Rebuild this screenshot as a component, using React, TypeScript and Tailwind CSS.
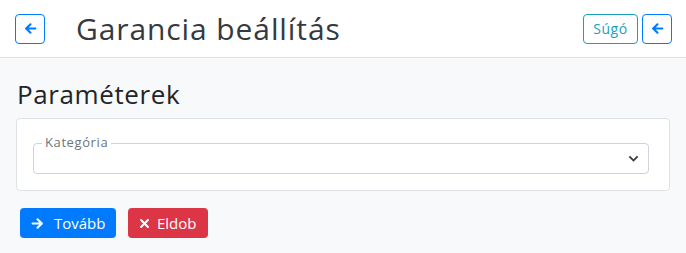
import React from 'react'

const font = { fontFamily: '"Open Sans", "Noto Sans", sans-serif' }

function ArrowLeft({ className }: { className?: string }) {
  return (
    <svg viewBox="0 0 16 16" className={className} fill="none" stroke="currentColor" strokeWidth="2.6" strokeLinecap="round" strokeLinejoin="round">
      <path d="M14 8H3M8 2.8L2.6 8 8 13.2" />
    </svg>
  )
}

function ArrowRight({ className }: { className?: string }) {
  return (
    <svg viewBox="0 0 16 16" className={className} fill="none" stroke="currentColor" strokeWidth="2.6" strokeLinecap="round" strokeLinejoin="round">
      <path d="M2 8h11M8 2.8L13.4 8 8 13.2" />
    </svg>
  )
}

function Times({ className }: { className?: string }) {
  return (
    <svg viewBox="0 0 16 16" className={className} fill="none" stroke="currentColor" strokeWidth="3" strokeLinecap="round">
      <path d="M3 3l10 10M13 3L3 13" />
    </svg>
  )
}

export default function App() {
  return (
    <div className="min-h-[253px] bg-[#f8f9fa]" style={font}>
      {/* header */}
      <div className="flex h-[58px] items-center border-b border-[#dee2e6] bg-white pl-[15px] pr-[14px]">
        <button className="flex h-[30px] w-[30px] items-center justify-center rounded-[4px] border border-[#007bff] text-[#007bff]">
          <ArrowLeft className="h-[13px] w-[13px]" />
        </button>
        <h1 className="ml-[31px] text-[30px] leading-none tracking-[0.9px] text-[#343a40]">Garancia beállítás</h1>
        <div className="ml-auto flex gap-[4px]">
          <button className="h-[30px] w-[55px] rounded-[4px] border border-[#17a2b8] text-[14px] tracking-[0.5px] text-[#17a2b8]">
            Súgó
          </button>
          <button className="flex h-[30px] w-[30px] items-center justify-center rounded-[4px] border border-[#007bff] text-[#007bff]">
            <ArrowLeft className="h-[13px] w-[13px]" />
          </button>
        </div>
      </div>

      {/* body */}
      <div className="px-4 pt-[19px]">
        <h3 className="pl-[1px] text-[26px] leading-[34px] tracking-[0.6px] text-[#212529]">Paraméterek</h3>
        <div className="mt-[7px] rounded-[4px] border border-[#dee2e6] bg-white pb-[16px] pl-4 pr-5 pt-[24px]">
          <div className="relative flex h-[31px] items-center rounded-[4px] border border-[#ced4da] pr-[9px]">
            <span className="absolute -top-[10px] left-[8px] bg-white px-[3px] text-[13px] leading-[16px] tracking-[0.6px] text-[#6c757d]">
              Kategória
            </span>
            <svg viewBox="0 0 16 16" className="ml-auto h-[11px] w-[11px] text-[#343a40]">
              <path d="M2 5l6 6 6-6" fill="none" stroke="currentColor" strokeWidth="2.6" />
            </svg>
          </div>
        </div>
        <div className="mt-[17px] flex gap-[12px] pl-1">
          <button className="flex h-[30px] w-[96px] items-center rounded-[4px] bg-[#007bff] pl-[11px] text-[15px] text-white">
            <ArrowRight className="h-[13px] w-[13px]" />
            <span className="ml-[10px]">Tovább</span>
          </button>
          <button className="flex h-[30px] w-[80px] items-center rounded-[4px] bg-[#dc3545] pl-[11px] text-[15px] text-white">
            <Times className="h-[11px] w-[11px]" />
            <span className="ml-[7px]">Eldob</span>
          </button>
        </div>
      </div>
    </div>
  )
}
